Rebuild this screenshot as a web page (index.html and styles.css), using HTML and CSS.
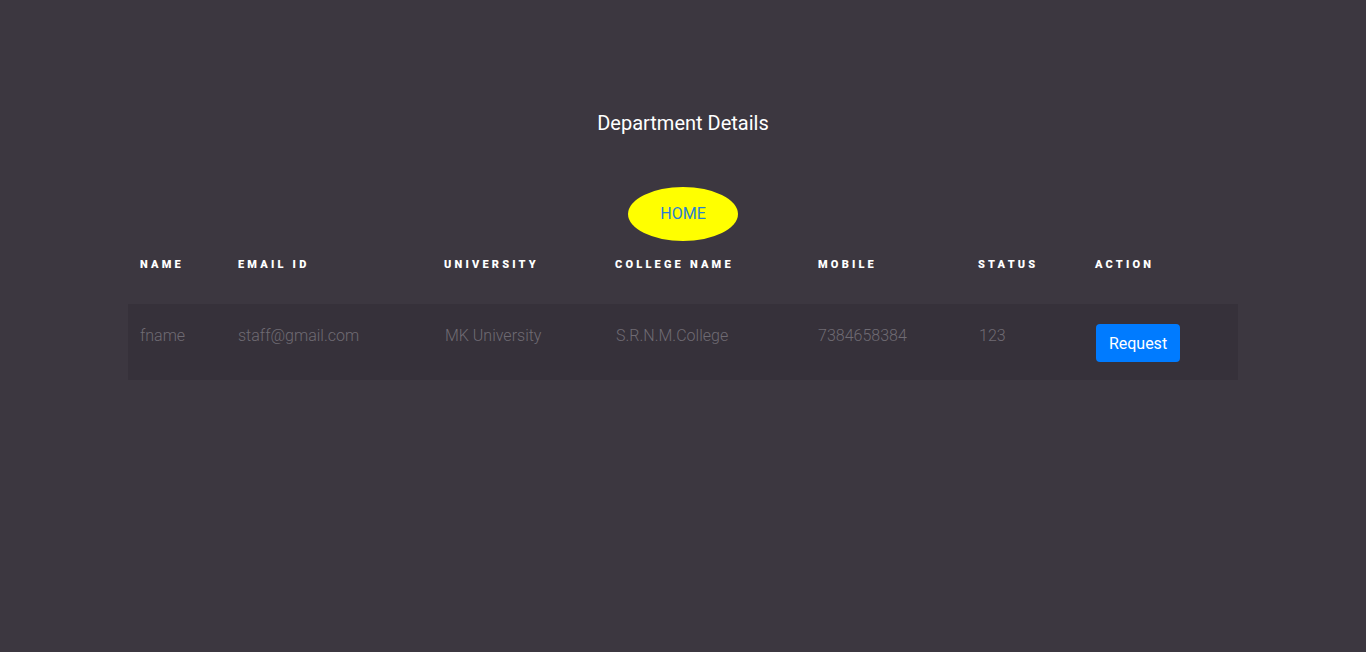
FILE: index.html
```html
<!DOCTYPE html>
<html lang="en">
<head>
<meta charset="utf-8">
<title>Department Details</title>
<link rel="stylesheet" href="styles.css">
</head>
<body>
<main class="page">
  <h2 class="title">Department Details</h2>
  <div class="home-wrap"><a class="home" href="#">HOME</a></div>
  <table class="dept-table">
    <colgroup>
      <col class="c1"><col class="c2"><col class="c3"><col class="c4"><col class="c5"><col class="c6"><col class="c7">
    </colgroup>
    <thead>
      <tr>
        <th>Name</th>
        <th>Email ID</th>
        <th>University</th>
        <th>College Name</th>
        <th>Mobile</th>
        <th>Status</th>
        <th>Action</th>
      </tr>
    </thead>
    <tbody>
      <tr>
        <td>fname</td>
        <td>staff@gmail.com</td>
        <td class="shift">MK University</td>
        <td class="shift">S.R.N.M.College</td>
        <td>7384658384</td>
        <td class="shift">123</td>
        <td class="shift"><button class="btn-request" type="button">Request</button></td>
      </tr>
    </tbody>
  </table>
</main>
</body>
</html>
```

FILE: styles.css
```css
html, body {
  margin: 0;
  padding: 0;
}
body {
  background: #3c3740;
  font-family: Roboto, "Liberation Sans", Arial, sans-serif;
  color: #fff;
  min-height: 652px;
}
.page {
  width: 1110px;
  margin: 0 auto;
  padding-top: 111px;
}
.title {
  margin: 0;
  font-size: 20px;
  line-height: 24px;
  font-weight: 400;
  text-align: center;
  color: #fff;
}
.home-wrap {
  display: flex;
  justify-content: center;
  margin-top: 52px;
}
.home {
  display: flex;
  align-items: center;
  justify-content: center;
  width: 110px;
  height: 54px;
  padding-bottom: 2px;
  box-sizing: border-box;
  border-radius: 50%;
  background: #ffff00;
  color: #2a7fd4;
  text-decoration: none;
  font-size: 16px;
  font-weight: 400;
}
.dept-table {
  width: 1110px;
  border-collapse: collapse;
  table-layout: fixed;
}
.c1 { width: 98px; }
.c2 { width: 206px; }
.c3 { width: 171px; }
.c4 { width: 203px; }
.c5 { width: 160px; }
.c6 { width: 117px; }
.c7 { width: 155px; }
.dept-table th {
  text-align: left;
  padding: 17px 12px 33px 12px;
  font-size: 11px;
  line-height: 13px;
  font-weight: 900;
  letter-spacing: 3.2px;
  text-transform: uppercase;
  color: #fff;
  white-space: nowrap;
}
.dept-table tbody tr {
  background: #36313a;
}
.dept-table td {
  padding: 20px 12px 18px 12px;
  vertical-align: top;
  font-size: 16px;
  line-height: 24px;
  font-weight: 300;
  color: #6f6b73;
  white-space: nowrap;
}
.dept-table td.shift {
  padding-left: 13px;
}
.btn-request {
  display: block;
  width: 84px;
  height: 38px;
  border: none;
  border-radius: 4px;
  background: #007bff;
  color: #fff;
  font-family: Roboto, "Liberation Sans", Arial, sans-serif;
  font-size: 16px;
  font-weight: 400;
  padding: 0;
  cursor: pointer;
}
```
